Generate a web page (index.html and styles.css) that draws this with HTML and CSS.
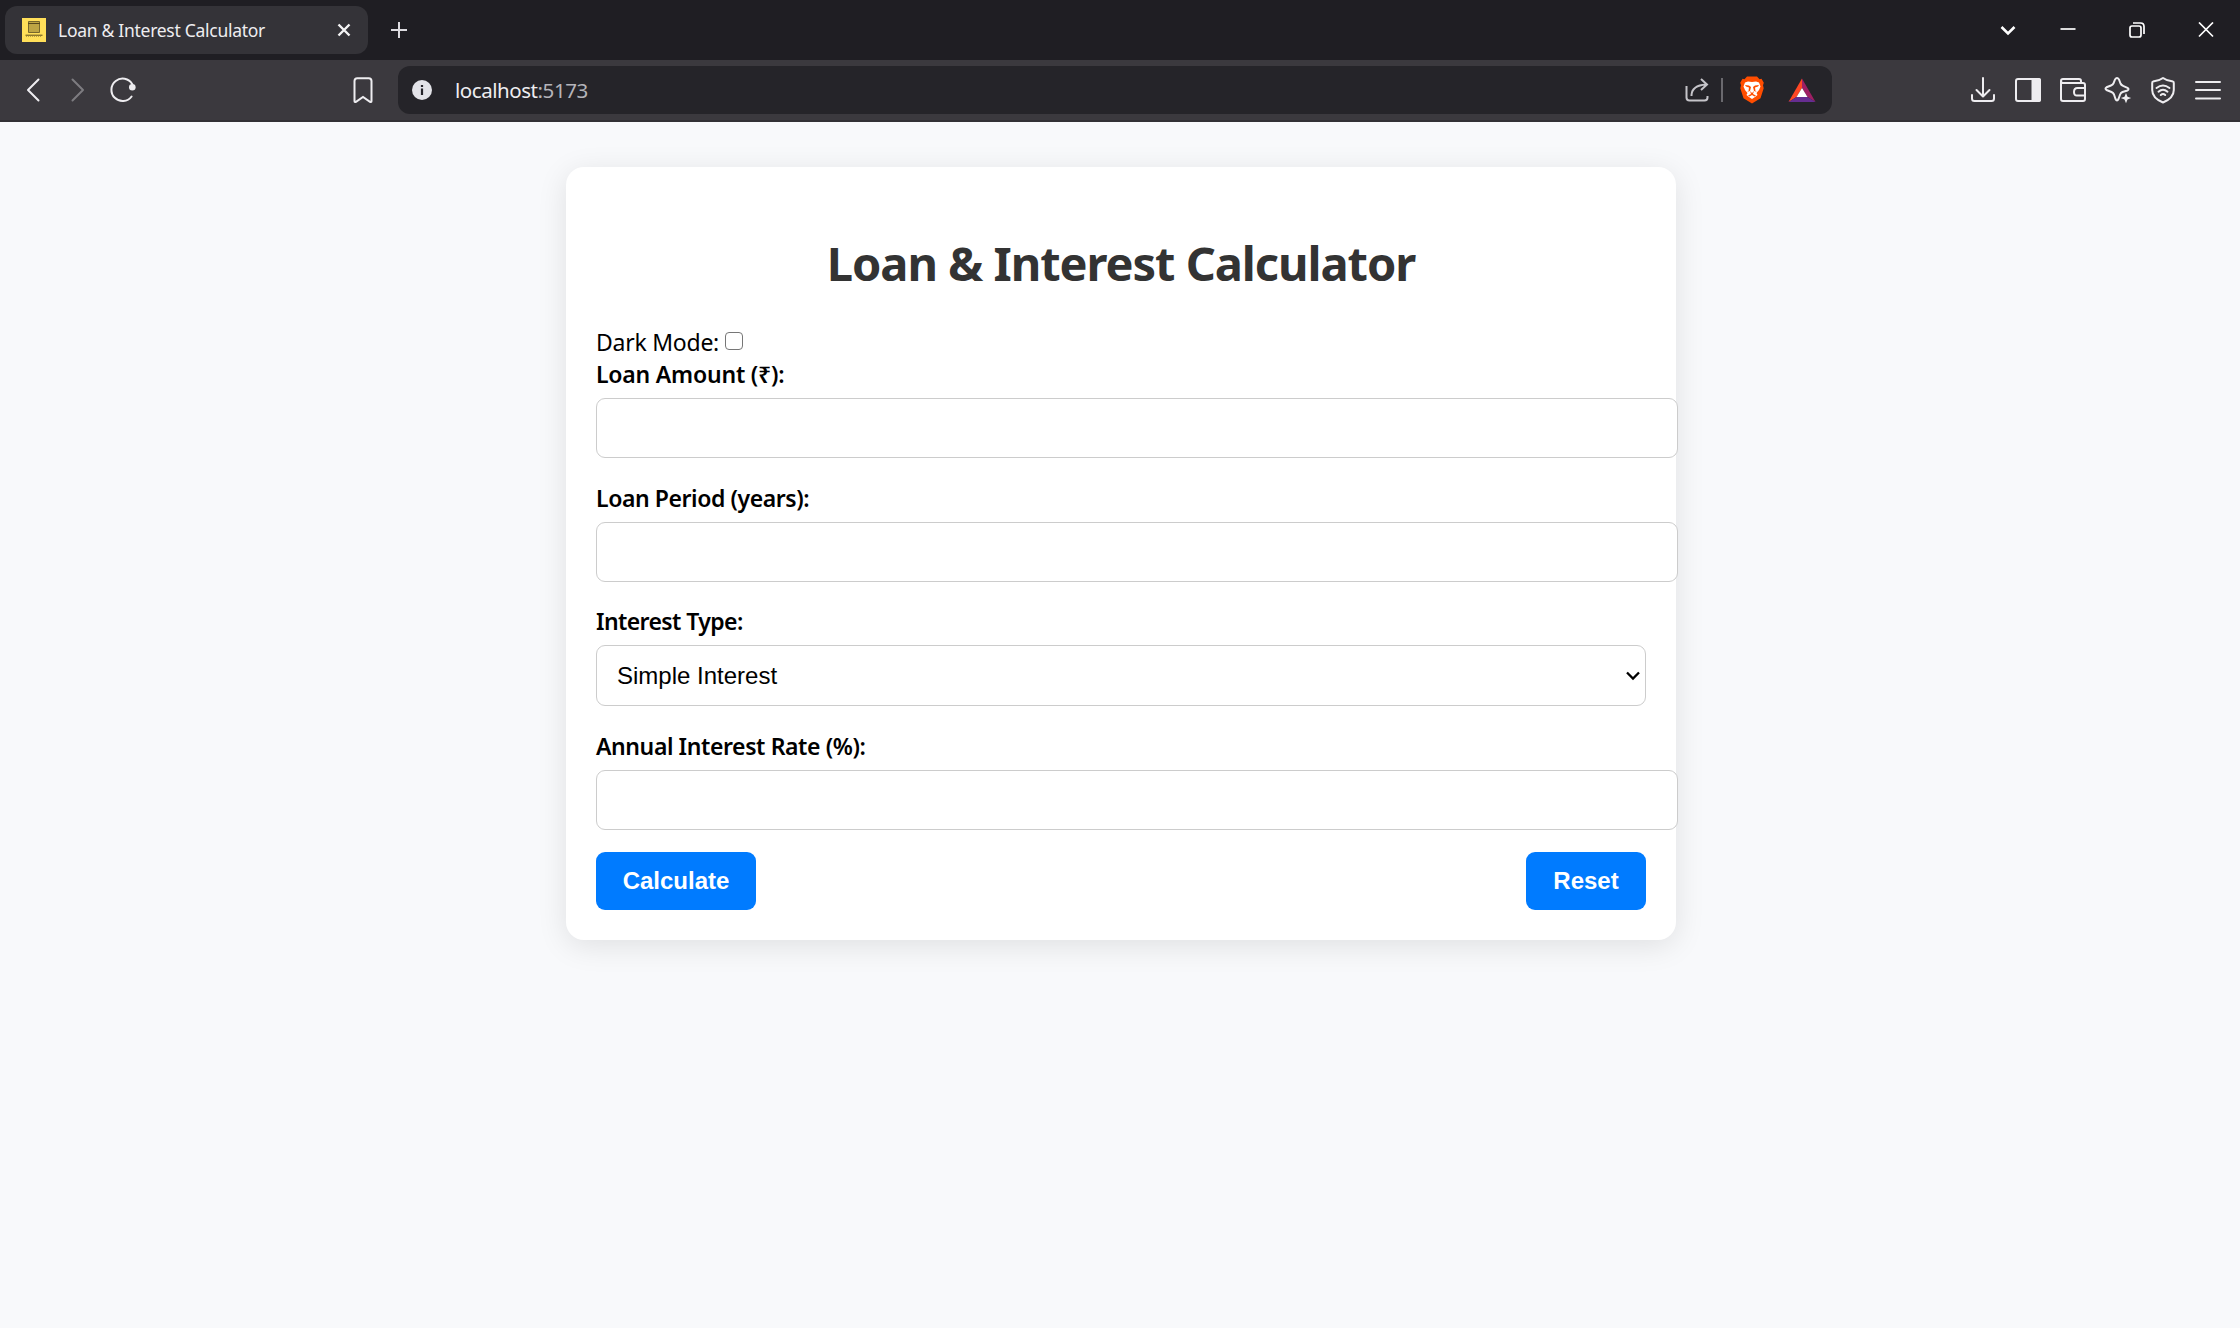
FILE: index.html
```html
<!DOCTYPE html>
<html lang="en">
<head>
<meta charset="utf-8">
<title>Loan &amp; Interest Calculator</title>
<link rel="stylesheet" href="styles.css">
</head>
<body>
<header class="browser">
  <div class="tab-strip">
    <div class="tab">
      <svg class="favicon" width="24" height="24" viewBox="0 0 24 24"><path fill="#ffdf59" d="M0 0h24v24H0z"/><path fill="#bda544" stroke="#76672c" d="M6.5 3.5h11v11h-11z"/><path stroke="#57491c" d="M6 5.5h12M3.5 17.2h17" fill="none"/><path stroke="#9a8636" stroke-dasharray="1 1" d="M4 18.2h16"/></svg>
      <span class="tab-title">Loan &amp; Interest Calculator</span>
      <svg class="tab-close" width="14" height="14" viewBox="0 0 14 14"><path d="M1.5 1.5l11 11M12.5 1.5l-11 11"/></svg>
    </div>
    <svg class="new-tab" width="16" height="16" viewBox="0 0 16 16"><path d="M8 0v16M0 8h16"/></svg>
    <div class="window-controls">
      <svg class="tab-search" width="16" height="16" viewBox="0 0 16 16"><path d="M1.5 5L8 11.500 14.500 5"/></svg>
      <svg width="16" height="16" viewBox="0 0 16 16"><path d="M.5 7h15"/></svg>
      <svg width="16" height="16" viewBox="0 0 16 16"><rect x="1" y="4" width="11" height="11" rx="2"/><path d="M4 1h7.500q3.500 0 3.500 3.500V12"/></svg>
      <svg width="16" height="16" viewBox="0 0 16 16"><path d="M1 .5l14 14M15 .5L1 14.500"/></svg>
    </div>
  </div>
  <div class="toolbar">
    <nav class="tools">
      <svg width="30" height="30" viewBox="0 0 30 30"><path d="M20.500 4.500L10 15l10.500 10.500"/></svg>
      <svg class="disabled" width="30" height="30" viewBox="0 0 30 30"><path d="M9.500 4.500L20 15 9.500 25.500"/></svg>
      <svg width="30" height="30" viewBox="0 0 30 30"><path d="M23.600 21.500A11.200 11.200 0 1 1 24.300 9.200"/><circle cx="24.300" cy="12.300" r="3.300" fill="#eeedf0" stroke="none"/></svg>
    </nav>
    <svg class="bookmark" width="30" height="30" viewBox="0 0 30 30"><path d="M6.500 26V6q0-2.800 2.800-2.800h11.400q2.800 0 2.800 2.800v20q0 1.500-1.500.8L15 22l-7 4.800q-1.500.7-1.500-.8z"/></svg>
    <div class="address">
      <svg width="20" height="20" viewBox="0 0 20 20"><circle cx="10" cy="10" r="10" fill="#e3e3e8"/><path fill="#252429" d="M8.900 5h2.200v2H8.900zM8.900 8.500h2.200V15H8.900z"/></svg>
      <span class="url">localhost<span class="port">:5173</span></span>
      <svg class="share" width="24" height="24" viewBox="0 0 24 24"><path d="M1.500 8v11.500q0 3 3 3h15q3 0 3-3V18M6.500 18v-1Q7 7.500 21 6.500M16 1l6 5.500-6 5.500"/></svg>
      <i class="divider"></i>
      <svg class="brave" width="24" height="28" viewBox="0 0 24 28"><path fill="#ff4d00" d="M7 .5h10l2.500 2.700 2-.5 2.300 4-.8 2.500.7 3-3.200 10L12 27.500 3.500 22.200.3 12.200l.7-3-.8-2.500 2.300-4 2 .5z"/><path fill="#fff" d="M8 5.500L12 6l4-.5 3 1 1.500 4-1.500 3.500-2.500 3 1 2L15 21l-3 2-3-2-2.500-2 1-2L5 14l-1.500-3.500L5 6.500z"/><path fill="#ff4d00" d="M5 9l4 .5 2 1.500-1 4 2 2 2-2-1-4 2-1.500 4-.5-1 1.500-3 1 .5 3.500L17 16l-3-1-1 3 3 1.500-1.500 1L12 19l-2.500 1.500L8 19.500l3-1.500-1-3-3 1 1.500-1L9 11.500l-3-1z"/></svg>
      <svg width="28" height="25" viewBox="0 0 28 25"><path fill="#ff4724" d="M14 .5V10L8.500 19 .5 24z"/><path fill="#9e1f63" d="M14 .5V10l5.500 9 8 5z"/><path fill="#662d91" d="M.5 24l8-5h11l8 5z"/><path fill="#fff" d="M14 10l5.500 9h-11z"/></svg>
    </div>
    <nav class="tools actions">
      <svg width="30" height="30" viewBox="0 0 30 30"><path d="M15 3v18M8.500 15l6.500 6.500 6.500-6.500M4 20v3.500q0 2.500 2.500 2.500h17q2.500 0 2.500-2.500V20"/></svg>
      <svg width="30" height="30" viewBox="0 0 30 30"><rect x="3" y="4" width="24" height="22" rx="2"/><path d="M19.500 4H26q1 0 1 1v20q0 1-1 1h-6.500z" fill="#eeedf0"/></svg>
      <svg width="30" height="30" viewBox="0 0 30 30"><path d="M23 8V6q0-2-2-2H5Q3 4 3 6v18q0 2 2 2h20q2 0 2-2V10q0-2-2-2H5Q3 8 3 6M27 13h-7.500q-3.500 0-3.500 4t3.500 3.500H27"/></svg>
      <svg width="30" height="30" viewBox="0 0 30 30"><path d="M12 4.500q2-3 4 0l1.500 4q.7 1.700 2.500 2.300l4.500 2q2 1.200 0 2.700L19.500 17q-1.800.8-2.400 2.500L15.500 24q-1.500 3-3 0L11 19.500Q10.300 17.800 8.500 17L3.500 15q-2-1.500 0-2.700L8 10.500q2-.6 2.600-2.300z"/><path stroke="none" fill="#eeedf0" d="M23 18l1.500 3.700L28.200 23l-3.700 1.500L23 28.200l-1.500-3.700-3.700-1.500 3.700-1.300z"/></svg>
      <svg width="30" height="30" viewBox="0 0 30 30"><path d="M15 3q4 3 10 3.500.8 0 .8 1.500v7q0 8-10.800 12.500Q4.200 23 4.200 15V8q0-1.500.8-1.500Q11 6 15 3z"/><path d="M8.500 13q6.500-5 13 0M10.500 16.700q4.500-4 9 0M12.800 20q2.200-2 4.400 0"/></svg>
      <svg width="30" height="30" viewBox="0 0 30 30"><path d="M3 7h24M3 15h24M3 23.500h24"/></svg>
    </nav>
  </div>
</header>
<main class="page">
  <section class="card">
    <h1>Loan &amp; Interest Calculator</h1>
    <div class="mode"><span>Dark Mode:</span><input class="check" type="checkbox" aria-label="Dark Mode"></div>
    <form>
      <label class="amount" for="amount">Loan Amount (₹):</label>
      <input class="field" id="amount" type="text">
      <label class="period" for="period">Loan Period (years):</label>
      <input class="field compact" id="period" type="text">
      <label class="type" for="type">Interest Type:</label>
      <div class="select" id="type" role="combobox" tabindex="0"><span>Simple Interest</span><svg width="14" height="10" viewBox="0 0 14 10"><path d="M1 1.500l6 6 6-6"/></svg></div>
      <label class="rate" for="rate">Annual Interest Rate (%):</label>
      <input class="field" id="rate" type="text">
      <div class="buttons"><button class="calculate" type="button">Calculate</button><button class="reset" type="button">Reset</button></div>
    </form>
  </section>
</main>
</body>
</html>
```
FILE: styles.css
```css
* { box-sizing: border-box; }
body { margin: 0; background: #f8f9fb; color: #000; font: 23px/32px "Noto Sans", sans-serif; }
svg { display: block; flex: none; fill: none; }
.browser { color: #eeedf0; }
.tab-strip { display: flex; align-items: center; height: 60px; padding-left: 5px; background: #1f1e23; }
.tab { display: flex; align-items: center; width: 363px; height: 48px; padding: 0 17px; border-radius: 12px; background: #343338; }
.tab-title { flex: 1; margin-left: 12px; padding-bottom: 1px; font-size: 17.5px; line-height: 24px; letter-spacing: -0.28px; white-space: nowrap; }
.tab-close { stroke: #f4f4f5; stroke-width: 2.4; }
.new-tab { margin-left: 23px; stroke: #dddce0; stroke-width: 2; }
.window-controls { display: grid; grid-template-columns: 51px 69px 69px 69px; justify-items: center; margin-left: auto; stroke: #fff; stroke-width: 1.7; }
.tab-search { stroke-width: 2.6; }
.toolbar { display: flex; align-items: center; height: 62px; padding: 0 10px 0 10px; background: #3b393e; box-shadow: inset 0 -2px #323135; }
.toolbar > * { margin-bottom: 2px; }
.tools { display: grid; grid-auto-flow: column; grid-auto-columns: 45px; justify-items: center; stroke: #eeedf0; stroke-width: 2; stroke-linecap: round; stroke-linejoin: round; }
.tools .disabled { stroke: #7d7c80; }
.bookmark { margin-left: 203px; stroke: #eeedf0; stroke-width: 2; }
.address { display: flex; align-items: center; width: 1434px; height: 48px; margin-left: 20px; padding: 0 16px 0 14px; border-radius: 12px; background: #252429; }
.url { flex: 1; margin-left: 23px; font-size: 20.5px; line-height: 28px; letter-spacing: -0.45px; }
.port { color: #b5b4ba; }
.share { stroke: #c5c4c9; stroke-width: 2; }
.divider { width: 2px; height: 24px; margin: 0 17px 0 12px; background: #6a696e; }
.brave { margin-right: 24px; }
.actions { margin-left: auto; }
.page { display: flex; justify-content: center; align-items: flex-start; min-height: 1206px; padding: 45px 0 0 2px; }
.card { width: 1110px; height: 773px; padding: 30px; border-radius: 18px; background: #fff; box-shadow: 0 6px 30px rgba(0, 0, 0, .1); }
h1 { margin: 34px 0 31px; color: #333; font-size: 47px; line-height: 64px; font-weight: 700; text-align: center; letter-spacing: -1.05px; white-space: nowrap; }
.mode { display: flex; height: 31px; line-height: 32px; letter-spacing: -0.25px; }
.check { appearance: none; width: 18px; height: 18px; margin: 6px 0 0 6px; border: 1.5px solid #767676; border-radius: 4px; background: #fff; }
form { display: flex; flex-direction: column; align-items: flex-start; }
label { margin-bottom: 7px; line-height: 34px; font-weight: 600; }
.amount { letter-spacing: -0.2px; }
.period { letter-spacing: -0.42px; }
.type { letter-spacing: -0.6px; }
.rate { letter-spacing: -0.4px; }
.field { width: 1082px; height: 60px; margin: 0 0 23px; padding: 0 20px; border: 1px solid #ccc; border-radius: 9px; background: #fff; font: 24px "Liberation Sans", sans-serif; }
.compact { margin-bottom: 22px; }
.select { display: flex; align-items: center; justify-content: space-between; width: 1050px; height: 61px; margin-bottom: 23px; padding: 0 5px 0 20px; border: 1px solid #ccc; border-radius: 9px; font: 24px "Liberation Sans", sans-serif; }
.select svg { stroke: #000; stroke-width: 2.3; }
.buttons { display: flex; justify-content: space-between; width: 1050px; margin-top: -1px; }
button { height: 58px; padding: 0; border: 0; border-radius: 9px; background: #007bff; color: #fff; font: bold 24px "Liberation Sans", sans-serif; }
.calculate { width: 160px; }
.reset { width: 120px; }
```
